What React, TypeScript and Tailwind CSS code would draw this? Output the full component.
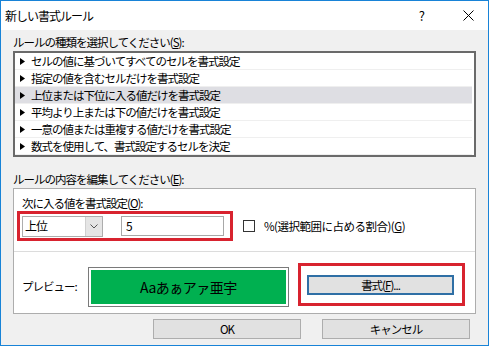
const font = { fontFamily: '"Noto Sans CJK JP", "Noto Sans", sans-serif' };

const rules = [
    "セルの値に基づいてすべてのセルを書式設定",
    "指定の値を含むセルだけを書式設定",
    "上位または下位に入る値だけを書式設定",
    "平均より上または下の値だけを書式設定",
    "一意の値または重複する値だけを書式設定",
    "数式を使用して、書式設定するセルを決定",
];

function Arrow() {
    return (
        <svg width="5" height="7" viewBox="0 0 5 7" className="shrink-0">
            <path d="M0 0 L5 3.5 L0 7 Z" fill="#000" />
        </svg>
    );
}

export default function App() {
    return (
        <div
            style={font}
            className="w-[489px] h-[346px] bg-[#f0f0f0] border border-[#1883d7] flex flex-col text-[11.5px] tracking-[-1px] text-black leading-[16px]"
        >
            {/* title bar */}
            <div className="h-[29px] bg-white flex items-center pl-[4px] pr-[14px]">
                <span className="text-[12px]">新しい書式ルール</span>
                <span className="ml-auto mr-[39px] text-[13px]">?</span>
                <svg width="11" height="11" viewBox="0 0 11 11">
                    <path d="M0.5 0.5 L10.5 10.5 M10.5 0.5 L0.5 10.5" stroke="#000" strokeWidth="1" />
                </svg>
            </div>

            <div className="flex flex-col px-[12px]">
                <div className="mt-[4px] h-[16px]">
                    ルールの種類を選択してください(<span className="underline">S</span>):
                </div>

                <div className="mt-[1px] h-[106px] bg-white border-2 border-[#6a6a6a] flex flex-col">
                    {rules.map((r, i) => (
                        <div
                            key={r}
                            className={
                                "h-[17px] flex items-center gap-[6px] pl-[5px] border-b border-[#efefef] mr-[2px] " +
                                (i === 2 ? "bg-[#dedee3]" : "")
                            }
                        >
                            <Arrow />
                            <span>{r}</span>
                        </div>
                    ))}
                </div>

                <div className="mt-[14px] h-[16px]">
                    ルールの内容を編集してください(<span className="underline">E</span>):
                </div>

                <div className="mt-[1px] h-[126px] bg-white border border-[#adadad] flex flex-col pt-[6px]">
                    <div className="pl-[8px] h-[16px]">
                        次に入る値を書式設定(<span className="underline">O</span>):
                    </div>
                    <div className="flex items-center">
                        <div className="ml-[3px] w-[216px] h-[30px] border-[3px] border-[#d8232f] flex items-center pl-[2px]">
                            <div className="w-[81px] h-[21px] border border-[#adadad] flex items-center">
                                <span className="pl-[2px] text-[12px] flex-1">上位</span>
                                <div className="w-[17px] h-full bg-[#e5e5e5] border-l border-[#d0d0d0] flex items-center justify-center">
                                    <svg width="8" height="5" viewBox="0 0 8 5">
                                        <path d="M0.5 0.5 L4 4 L7.5 0.5" fill="none" stroke="#555" strokeWidth="1" />
                                    </svg>
                                </div>
                            </div>
                            <div className="ml-[18px] w-[103px] h-[20px] border border-[#a8a8a8] flex items-center pl-[4px] text-[12px]">
                                5
                            </div>
                        </div>
                        <div className="ml-[10px] w-[12px] h-[12px] border border-[#333] bg-white" />
                        <span className="ml-[9px] tracking-[-0.5px]">
                            %(選択範囲に占める割合)(<span className="underline">G</span>)
                        </span>
                    </div>
                    <div className="mt-[10px] h-px bg-[#dcdcdc]" />
                    <div className="mt-[11px] h-[44px] flex items-start">
                        <span className="ml-[8px] mt-[15px] w-[66px]">プレビュー:</span>
                        <div className="mt-[4px] w-[201px] h-[40px] border border-[#7a7a7a] p-[2px] bg-white">
                            <div className="w-full h-full bg-[#00b050] flex items-center justify-center text-[14px] tracking-[-0.5px]">
                                Aaあぁアァ亜宇
                            </div>
                        </div>
                        <div className="ml-[9px] w-[167px] h-[43px] border-[3px] border-[#d8232f] flex items-center pl-[6px]">
                            <div className="w-[147px] h-[20px] bg-[#e1e1e1] border-2 border-[#2f6fa5] flex items-center justify-center">
                                書式(<span className="underline">F</span>)...
                            </div>
                        </div>
                    </div>
                </div>

                <div className="mt-[5px] flex justify-end gap-[21px] pr-[6px]">
                    <div className="w-[148px] h-[20px] bg-[#e1e1e1] border border-[#adadad] flex items-center justify-center">
                        OK
                    </div>
                    <div className="w-[148px] h-[20px] bg-[#e1e1e1] border border-[#adadad] flex items-center justify-center">
                        キャンセル
                    </div>
                </div>
            </div>
        </div>
    );
}
